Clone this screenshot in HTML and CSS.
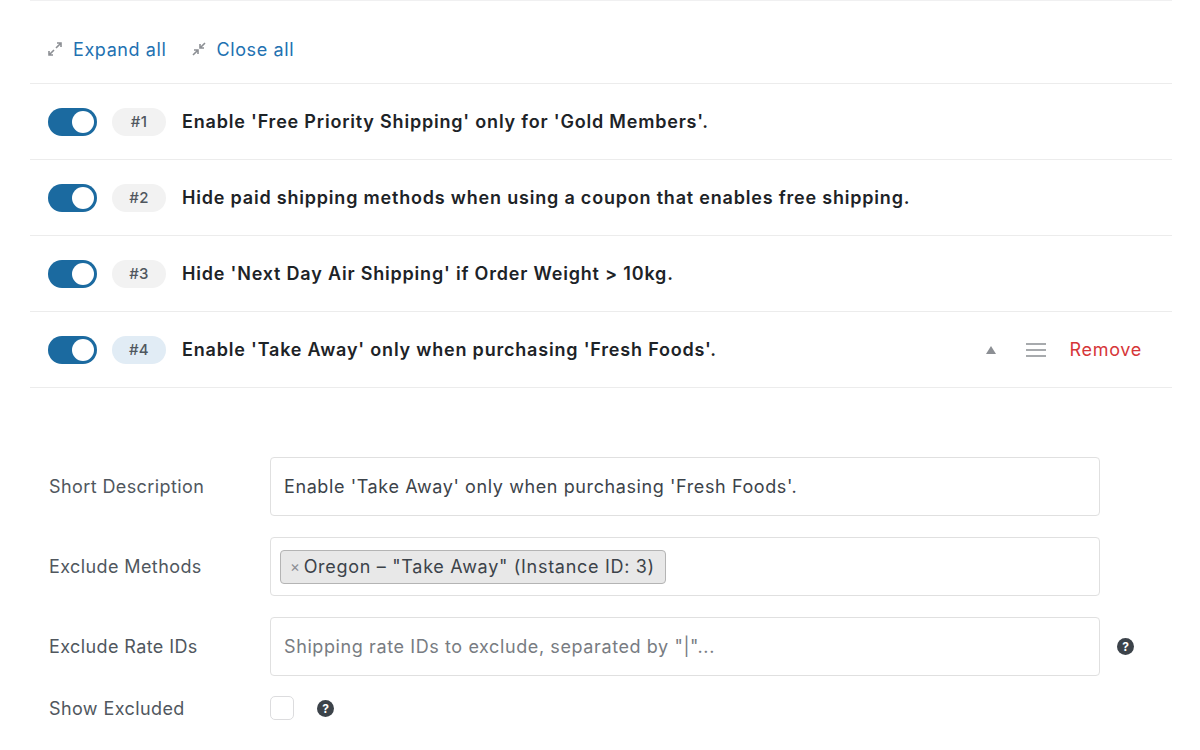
FILE: index.html
```html
<!DOCTYPE html>
<html>
<head>
<meta charset="utf-8">
<link rel="stylesheet" href="styles.css">
</head>
<body>
<div class="page">
  <div class="toolbar">
    <a class="tool-link">
      <svg class="tool-icon" viewBox="0 0 16 16" width="16" height="16"><path d="M9 7 L14 2 M10 2 H14 V6 M7 9 L2 14 M2 10 V14 H6" fill="none" stroke="#8c8f94" stroke-width="1.6"/></svg>
      <span>Expand all</span>
    </a>
    <a class="tool-link">
      <svg class="tool-icon" viewBox="0 0 16 16" width="16" height="16"><path d="M14 2 L9 7 M9 3 V7 H13 M2 14 L7 9 M3 9 H7 V13" fill="none" stroke="#8c8f94" stroke-width="1.6"/></svg>
      <span>Close all</span>
    </a>
  </div>

  <div class="rules">
    <div class="rule">
      <span class="toggle"><span class="knob"></span></span>
      <span class="badge">#1</span>
      <span class="rule-title">Enable 'Free Priority Shipping' only for 'Gold Members'.</span>
    </div>
    <div class="rule">
      <span class="toggle"><span class="knob"></span></span>
      <span class="badge">#2</span>
      <span class="rule-title">Hide paid shipping methods when using a coupon that enables free shipping.</span>
    </div>
    <div class="rule">
      <span class="toggle"><span class="knob"></span></span>
      <span class="badge">#3</span>
      <span class="rule-title">Hide 'Next Day Air Shipping' if Order Weight &gt; 10kg.</span>
    </div>
    <div class="rule rule-open">
      <span class="toggle"><span class="knob"></span></span>
      <span class="badge badge-active">#4</span>
      <span class="rule-title">Enable 'Take Away' only when purchasing 'Fresh Foods'.</span>
      <span class="rule-actions">
        <svg class="caret" viewBox="0 0 12 10" width="12" height="10"><polygon points="6,1 11,9 1,9" fill="#8c8f94"/></svg>
        <svg class="handle" viewBox="0 0 20 16" width="20" height="16"><path d="M0 2 H20 M0 8 H20 M0 14 H20" stroke="#a7aaad" stroke-width="1.8"/></svg>
        <span class="remove">Remove</span>
      </span>
    </div>
  </div>

  <div class="details">
    <div class="field">
      <label class="field-label">Short Description</label>
      <div class="input">Enable 'Take Away' only when purchasing 'Fresh Foods'.</div>
    </div>
    <div class="field">
      <label class="field-label">Exclude Methods</label>
      <div class="input input-tags">
        <span class="tag"><span class="tag-x">×</span>Oregon – "Take Away" (Instance ID: 3)</span>
      </div>
    </div>
    <div class="field">
      <label class="field-label">Exclude Rate IDs</label>
      <div class="input placeholder">Shipping rate IDs to exclude, separated by "|"...</div>
      <span class="help help-side">?</span>
    </div>
    <div class="field field-check">
      <label class="field-label">Show Excluded</label>
      <span class="checkbox"></span>
      <span class="help">?</span>
    </div>
  </div>
</div>
</body>
</html>
```

FILE: styles.css
```css
* { box-sizing: border-box; }
html, body { margin: 0; padding: 0; background: #fff; }
body {
  font-family: Inter, "Liberation Sans", sans-serif;
  color: #1d2327;
  overflow: hidden;
  letter-spacing: 0.7px;
}
.page {
  width: 1142px;
  margin-left: 30px;
  border-top: 1px solid #f0f0f1;
}
.toolbar {
  height: 83px;
  display: flex;
  align-items: center;
  gap: 24px;
  padding: 14px 0 0 17px;
  border-bottom: 1px solid #ececec;
}
.tool-link {
  display: flex;
  align-items: center;
  gap: 10px;
  color: #2271b1;
  font-size: 18px;
  letter-spacing: 0.6px;
  text-decoration: none;
}
.tool-icon { display: block; }

.rule {
  height: 76px;
  display: flex;
  align-items: center;
  padding-left: 18px;
  border-bottom: 1px solid #ececec;
}
.toggle {
  width: 49px;
  height: 28px;
  border-radius: 14px;
  background: #1b6aa0;
  display: flex;
  align-items: center;
  justify-content: flex-end;
  padding-right: 3px;
  flex: none;
}
.knob {
  width: 22px;
  height: 22px;
  border-radius: 50%;
  background: #fff;
}
.badge {
  margin-left: 15px;
  width: 54px;
  height: 28px;
  border-radius: 14px;
  background: #f2f2f2;
  color: #50575e;
  font-size: 15px;
  font-weight: 500;
  letter-spacing: 0.3px;
  display: flex;
  align-items: center;
  justify-content: center;
  flex: none;
}
.badge-active { background: #e1ecf5; }
.rule-title {
  margin-left: 16px;
  font-size: 18px;
  font-weight: 600;
  color: #1d2327;
  letter-spacing: 0.8px;
}
.rule-actions {
  margin-left: auto;
  display: flex;
  align-items: center;
  padding-right: 30px;
}
.caret { margin-right: 29px; }
.handle { margin-right: 24px; }
.remove {
  color: #d63638;
  font-size: 18px;
}

.details {
  padding: 69px 0 0 19px;
  display: flex;
  flex-direction: column;
  gap: 21px;
}
.field {
  display: flex;
  align-items: center;
}
.field-label {
  width: 221px;
  flex: none;
  font-size: 18px;
  letter-spacing: 0.4px;
  color: #50575e;
}
.input {
  width: 830px;
  height: 59px;
  border: 1px solid #e0e0e0;
  border-radius: 4px;
  display: flex;
  align-items: center;
  padding: 0 13px;
  font-size: 18px;
  letter-spacing: 0.6px;
  color: #3c434a;
}
.placeholder { color: #787c82; }
.input-tags { padding: 0 9px; }
.tag {
  display: flex;
  align-items: center;
  height: 34px;
  padding: 0 10px 0 9px;
  background: #e8e8e8;
  border: 1px solid #b4b4b4;
  border-radius: 4px;
  font-size: 18px;
  letter-spacing: 0.7px;
  color: #3c434a;
}
.tag-x {
  color: #8c8f94;
  font-size: 15px;
  margin-right: 3px;
}
.help {
  width: 17px;
  height: 17px;
  border-radius: 50%;
  background: #3c434a;
  color: #fff;
  font-size: 12px;
  font-weight: 700;
  letter-spacing: 0;
  display: flex;
  align-items: center;
  justify-content: center;
  flex: none;
}
.help-side { margin-left: 17px; }
.field-check { margin-top: -1px; }
.checkbox {
  width: 24px;
  height: 24px;
  border: 1px solid #dcdcde;
  border-radius: 5px;
  flex: none;
}
.field-check .help { margin-left: 23px; }
```
